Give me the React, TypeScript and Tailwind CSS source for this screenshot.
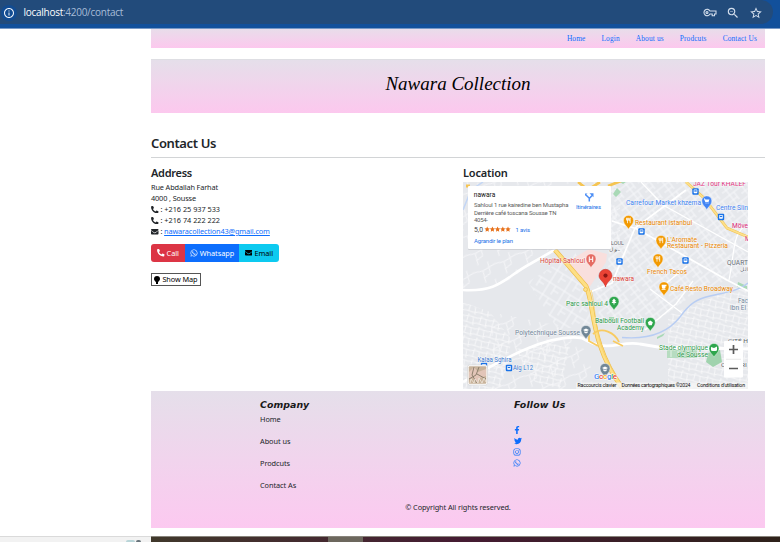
import React from "react";
import {
  FaPhoneAlt,
  FaEnvelope,
  FaWhatsapp,
  FaFacebookF,
  FaTwitter,
  FaInstagram,
} from "react-icons/fa";
import { MdOutlineInfo, MdStarBorder, MdZoomOut } from "react-icons/md";

type LabelProps = {
  x: number;
  y: number;
  w: number;
  fill: string;
  size?: number;
  children: string;
};

function Label({ x, y, w, fill, size = 6.8, children }: LabelProps) {
  return (
    <text
      x={x}
      y={y}
      textLength={w}
      lengthAdjust="spacingAndGlyphs"
      fontSize={size}
      fill={fill}
      stroke="#ffffff"
      strokeWidth={1}
      strokeOpacity={0.6}
      paintOrder="stroke"
      fontWeight={400}
    >
      {children}
    </text>
  );
}

type PinKind = "food" | "cup" | "cart" | "school" | "tree" | "ball" | "stadium" | "hospital";

function Pin({ x, y, color, kind }: { x: number; y: number; color: string; kind: PinKind }) {
  return (
    <g transform={`translate(${x} ${y})`}>
      <path
        d="M0 8.2C-.8 5.8-5 3.6-5-.6A5 5 0 0 1 5-.6C5 3.6.8 5.8 0 8.2Z"
        fill={color}
        stroke="#fff"
        strokeWidth=".4"
      />
      {kind === "food" && (
        <path d="M-2-3.2v2.4h2v-2.4M-1-3.2v5.4M1.7 2.2v-5.4q-.9.6-.9 3h.9" fill="none" stroke="#fff" strokeWidth=".75" />
      )}
      {kind === "cup" && (
        <path d="M-2.4-2.8h4.9v1.5h-1v1.2q0 1.3-1.3 1.3h-1q-1.3 0-1.3-1.3zM-2.4 1.7h4v.8h-4z" fill="#fff" />
      )}
      {kind === "cart" && (
        <path d="M-3-2.9h1.2l.4.9h4L1.7.4h-3.2zM-1.2 1h.9v.9h-.9zM.8 1h.9v.9H.8z" fill="#fff" />
      )}
      {kind === "school" && (
        <path d="M-3-1 0-2.6 3-1 0 .6zM-1.8.2 0 1.3 1.8.2v1.3L0 2.5l-1.8-1z" fill="#fff" />
      )}
      {kind === "tree" && <path d="m0-3.4 2 2.5H1L2.5 1H.5v1.5h-1V1h-2L-1-.9h-1z" fill="#fff" />}
      {kind === "ball" && <path d="m0-2.5 2.5 1.8-1 2.9h-3l-1-2.9z" fill="#fff" />}
      {kind === "stadium" && <path d="M-3-2 0-1l3-1.4v3.8q-3 1.3-6 0z" fill="#fff" />}
      {kind === "hospital" && <path d="M-1.7-3v5.6M1.7-3v5.6M-1.7-.2h3.4" fill="none" stroke="#fff" strokeWidth="1" />}
    </g>
  );
}

function BusStop({ x, y }: { x: number; y: number }) {
  return (
    <g transform={`translate(${x} ${y})`}>
      <rect x="-3.2" y="-3.2" width="6.4" height="6.4" rx="1" fill="#1a73e8" />
      <rect x="-1.8" y="-2" width="3.6" height="3.7" rx=".6" fill="#fff" />
      <path d="M-1.2-1.2h2.4V.1h-2.4z" fill="#1a73e8" />
    </g>
  );
}

const orange = "#e98600";
const green = "#2b984a";
const blue = "#3b7ff0";

function MapDrawing() {
  return (
    <svg
      viewBox="463 182 285 207"
      className="block h-[207px] w-[285px] font-[Roboto,sans-serif]"
    >
      <defs>
        <pattern id="streets-a" width="15" height="12" patternUnits="userSpaceOnUse" patternTransform="rotate(-38)">
          <path d="M0 3H15M0 9H10M5 0V12M10 3V12" stroke="#f7f8fa" strokeWidth=".9" fill="none" />
        </pattern>
        <pattern id="streets-b" width="17" height="14" patternUnits="userSpaceOnUse" patternTransform="rotate(32)">
          <path d="M0 4H17M4 0V14M11 4V14M11 9H17" stroke="#f7f8fa" strokeWidth=".9" fill="none" />
        </pattern>
        <pattern id="streets-c" width="13" height="11" patternUnits="userSpaceOnUse" patternTransform="rotate(12)">
          <path d="M0 3 5 2 13 3M0 8 8 9 13 8M4 0 3 8M9 3 10 11" stroke="#fafafb" strokeWidth=".8" fill="none" />
        </pattern>
        <pattern id="streets-d" width="23" height="19" patternUnits="userSpaceOnUse" patternTransform="rotate(-24)">
          <path d="M0 5 9 7 23 5M9 7 7 19M7 14 15 12 17 0" stroke="#f7f8fa" strokeWidth=".8" fill="none" />
        </pattern>
      </defs>
      <rect x="463" y="182" width="285" height="207" fill="#e6e8ec" />

      <path d="M463 182H620V246H463ZM463 249H550L505 283 463 288Z" fill="url(#streets-d)" />
      <path d="M612 182H748V273L700 290 640 333 600 322 595 290 608 268Z" fill="url(#streets-a)" />
      <path d="M528 282 575 252 592 290 590 324 558 330Z" fill="url(#streets-b)" />
      <path d="M463 302 490 312 512 340 500 389H463ZM515 349 548 343 570 347 560 389 535 382ZM668 315 748 283V389H668Z" fill="url(#streets-c)" />
      <path d="M490 312 555 325 582 345 600 389H495Z" fill="url(#streets-d)" />

      <path d="M567 262 589 249 607 254 606 262 589 288Z" fill="#f9dfdd" />
      <path d="m617 188 4 4-5 5-3-3zM620 182h6l-3 2zM738 282l9 4v3l-10-2zM657 337l8-4-2 3-6 3zM609 317h5v4h-5z" fill="#a9d9b6" />
      <path d="M667 350h30v8h-30z" fill="#b6dcc0" />
      <path d="M671 351v6M678 351v6M688 351v6" stroke="#e3f1e6" strokeWidth="1" />
      <path d="M708 353l12-3 2 12-9 5-7-5z" fill="#a0d3ae" />
      <path d="M622 337.5C651 340 669 331 680 317 690 303 697 299 710 296 728 292 738 291 748 283" fill="none" stroke="#b8cdf3" strokeWidth="1.4" />
      <path d="M463 210l8-20 12-8" fill="none" stroke="#c3d6f5" strokeWidth="1.5" />

      <path d="M463 290C500 292 504 278 530 264L558 248" fill="none" stroke="#fff" strokeWidth="2.6" />
      <path d="M463 382C500 361 547 333 582 338 608 354 620 340 640 344L658 347 748 349" fill="none" stroke="#fff" strokeWidth="2.8" />
      <path d="M590 292 612 283 635 228 686 190M612 221 637 229 727 280 748 291" fill="none" stroke="#fff" strokeWidth="1.7" />
      <path d="M645 330 676 304 693 281M663 286 687 266" fill="none" stroke="#fff" strokeWidth="1.4" />
      <path d="M748 224C732 232 735 251 729 280M641 182 663 205 748 252M650 289 682 313" fill="none" stroke="#fff" strokeWidth="1.2" />

      <g fill="none">
        <path d="M555 250 586 286C595 304 589 343 623 389" stroke="#eebb45" strokeWidth="4.6" />
        <path d="M555 250 586 286C595 304 589 343 623 389" stroke="#fddf85" strokeWidth="3.3" />
        <path d="M593 334C602 326 615 333 619 342M613 341l10 5M589 334v7l9 5" stroke="#f8cb61" strokeWidth="1.8" />
        <path d="M686 182 704 198 727 228 748 237M466 186h4M578 182l10 8 12-8M608 186l13-5" stroke="#f5c451" strokeWidth="2.8" />
        <path d="M686 182 704 198 727 228 748 237" stroke="#fce08c" strokeWidth="1.7" />
      </g>
      <circle cx="585.5" cy="289.5" r="2" fill="#fddf85" stroke="#eebb45" strokeWidth=".7" />
      <path d="M591 290C597 307 592 340 615 374" fill="none" stroke="#f6c955" strokeWidth=".6" />

      <BusStop x={695.5} y={191.5} />
      <BusStop x={721} y={217} />
      <BusStop x={641.5} y={231.5} />
      <BusStop x={619.5} y={261.5} />
      <BusStop x={685.5} y={260.5} />
      <BusStop x={509} y={368} />
      <BusStop x={484} y={366} />

      <Label x={693} y={186.3} w={53} fill="#e1347e" size={7.2}>JAZ Tour KHALEF</Label>
      <Label x={626} y={205.3} w={75} fill={blue}>Carrefour Market khzema</Label>
      <Label x={716} y={210} w={32} fill={blue}>Centre Slin</Label>
      <Label x={635} y={225} w={57} fill={orange}>Restaurant istanbul</Label>
      <Label x={732} y={227.5} w={16} fill="#d81b72">Möve</Label>
      <Label x={745} y={241} w={5} fill="#d81b72">M</Label>
      <Label x={667} y={241.8} w={30} fill={orange}>L'Aromate</Label>
      <Label x={667} y={248.3} w={61} fill={orange}>Restaurant - Pizzeria</Label>
      <Label x={611} y={245} w={13} fill="#5f6368" size={5}>LOUL</Label>
      <Label x={609} y={250.5} w={10} fill="#5f6368" size={5}>ـول</Label>
      <Label x={727} y={264.5} w={21} fill="#676c75">QUART</Label>
      <Label x={740} y={271} w={8} fill="#676c75" size={5}>الل</Label>
      <Label x={540} y={262.8} w={45} fill="#d9453d">Hôpital Sahloul</Label>
      <Label x={647} y={274.3} w={40} fill={orange}>French Tacos</Label>
      <Label x={613} y={280.7} w={21} fill="#d93d35">nawara</Label>
      <Label x={670} y={291.3} w={63} fill={orange}>Café Resto Broadway</Label>
      <Label x={738} y={303} w={10} fill="#70859a">Fac</Label>
      <Label x={730} y={309.5} w={16} fill="#70859a">Ibn El</Label>
      <Label x={566} y={306} w={42} fill={green}>Parc sahloul 4</Label>
      <Label x={595} y={323.3} w={49} fill={green}>Balbouli Football</Label>
      <Label x={617} y={330} w={27} fill={green}>Academy</Label>
      <Label x={515} y={334.5} w={65} fill="#70859a">Polytechnique Sousse</Label>
      <Label x={659} y={350} w={49} fill={green}>Stade olympique</Label>
      <Label x={677} y={356.5} w={31} fill={green}>de Sousse</Label>
      <Label x={477.5} y={362.3} w={34} fill="#3977cf">Kalaa Sghira</Label>
      <Label x={513} y={370.3} w={20} fill="#3977cf">Aig L12</Label>
      <Label x={728} y={343} w={20} fill="#5f6368" size={5}>CITÉ H</Label>
      <Label x={721} y={367} w={26} fill="#5f6368" size={5}>CITÉ ERI</Label>

      <Pin x={628.5} y={221} color="#f29900" kind="food" />
      <Pin x={661} y={241} color="#f29900" kind="food" />
      <Pin x={658} y={259.5} color="#f29900" kind="food" />
      <Pin x={664} y={287.5} color="#f29900" kind="cup" />
      <Pin x={706.8} y={201.5} color="#4285f4" kind="cart" />
      <Pin x={591} y={259.5} color="#e56b62" kind="hospital" />
      <Pin x={614} y={302} color="#2ea64d" kind="tree" />
      <Pin x={650.3} y={323} color="#2ea64d" kind="ball" />
      <Pin x={586} y={331} color="#718797" kind="school" />
      <Pin x={605} y={369} color="#718797" kind="school" />
      <Pin x={714} y={349} color="#2ea64d" kind="stadium" />
      <path d="M605.5 287C604.5 282 599 280 599 275.8a6.5 6.5 0 0 1 13 0C612 280 606.5 282 605.5 287Z" fill="#ea4335" stroke="#c5221f" strokeWidth=".5" />
      <circle cx="605.5" cy="275.6" r="2.1" fill="#8c1713" />

      <text x="594" y="379.3" fontSize="8" fontWeight="500" textLength="23" stroke="#fff" strokeWidth="1" paintOrder="stroke">
        <tspan fill="#4285f4">G</tspan><tspan fill="#ea4335">o</tspan><tspan fill="#f5b100">o</tspan><tspan fill="#4285f4">g</tspan><tspan fill="#34a853">l</tspan><tspan fill="#ea4335">e</tspan>
      </text>
      <rect x="576" y="382.5" width="172" height="6.5" fill="#f5f5f5" opacity=".8" />
      <g fontSize="5.2" fill="#111">
        <text x="577.5" y="387.2" textLength="39">Raccourcis clavier</text>
        <text x="621.5" y="387.2" textLength="69">Données cartographiques ©2024</text>
        <text x="697" y="387.2" textLength="48">Conditions d'utilisation</text>
      </g>

      <g>
        <rect x="467.5" y="365" width="20" height="20" rx="2" fill="#fff" stroke="#c9c9c9" strokeWidth=".5" />
        <rect x="468.7" y="366.2" width="17.6" height="17.6" rx="1" fill="#c8b39b" />
        <path d="m469 372 5-5 4 5 8-3v7l-6 2-3 5-4-5-4 1z" fill="#e2c5b8" />
        <path d="m469 379 7-4 3-8M474 367l-2 8 5 8M477 374l9 5" fill="none" stroke="#857865" strokeWidth=".9" />
        <path d="m470 383 1-4 3 4 1-4 3 4 1-5 3 5 2-5 2 4" fill="none" stroke="#f1e8dd" strokeWidth=".8" />
      </g>
      <rect x="724" y="341" width="19" height="36.5" rx="1" fill="#fff" />
      <path d="M726 359.3h15" stroke="#e5e5e5" strokeWidth=".8" />
      <path d="M729 349.5h9M733.5 345v9M729 368.5h9" stroke="#5b5b5b" strokeWidth="1.7" />

      <rect x="468" y="187" width="143" height="63" rx="1" fill="#bfc2c8" opacity=".6" />
      <rect x="468" y="186" width="143" height="63" rx="1" fill="#fff" />
      <text x="473.8" y="197.2" textLength="21.5" lengthAdjust="spacingAndGlyphs" fontSize="7" fill="#111">nawara</text>
      <g fontSize="6" fill="#5c5c5c">
        <text x="474" y="207.4" textLength="94.5">Sahloul 1 rue kairedine ben Mustapha</text>
        <text x="474" y="214.5" textLength="82.5">Derrière café toscana Sousse TN</text>
        <text x="474" y="221.7" textLength="14">4054-</text>
      </g>
      <text x="474" y="231.5" textLength="9" fontSize="6.8" fill="#444">5,0</text>
      {[0, 1, 2, 3, 4].map((i) => (
        <path
          key={i}
          transform={`translate(${487.2 + i * 5.2} 229.2)`}
          d="m0-2.6.8 1.7 1.9.2L1.3.6l.3 1.9L0 1.6l-1.6.9.3-1.9-1.4-1.3 1.9-.2z"
          fill="#e7711b"
        />
      ))}
      <g fontSize="6" fill="#1a73e8">
        <text x="515.5" y="231.5" textLength="14.5">1 avis</text>
        <text x="474" y="243" textLength="39">Agrandir le plan</text>
        <text x="576" y="209" textLength="25">Itinéraires</text>
      </g>
      <path d="M589.3 201.5v-3.3l-3.3-3.2M589.3 198.5l2.8-3" stroke="#4b8df5" strokeWidth="1.5" fill="none" />
      <path d="M589.5 193.2h4v4zM585 193.5h2.5L585 196z" fill="#4b8df5" />
    </svg>
  );
}

const ui = "font-['Noto_Sans','Open_Sans',sans-serif]";

function BrowserBar() {
  return (
    <header className="h-[29px] border-b border-[#7899c6] bg-[#12509b]">
      <div className="flex h-6 w-[773px] items-center rounded-r-full bg-[#224b7b] pt-px">
        <span className="ml-px flex size-4 items-center justify-center rounded-full bg-[#124c92]">
          <MdOutlineInfo size={12} color="#f2f6fc" />
        </span>
        <span className="ml-[6.5px] font-['Open_Sans',sans-serif] text-[10px] tracking-[-0.27px] text-[#a9bdd8]">
          <span className="text-white">localhost</span>:4200/contact
        </span>
        <div className="ml-auto flex items-center pr-[10px] text-[#d3deed]">
          <svg viewBox="0 0 14 9" className="mr-[9px] h-[9px] w-[14px]" fill="none" stroke="currentColor" strokeWidth="1.1">
            <path d="M7 3a3.2 3.2 0 1 0 0 3h2.2v1.8h2.3V6H13V3Z" />
            <circle cx="4" cy="4.5" r="1" />
          </svg>
          <MdZoomOut size={14} className="mr-[9px]" />
          <MdStarBorder size={14} />
        </div>
      </div>
    </header>
  );
}

function Address() {
  return (
    <section className="w-[312px]">
      <h2 className="mt-[6px] h-[18px] text-[11px] leading-[17px] font-semibold tracking-[-0.3px]">Address</h2>
      <address className="text-[7.33px] leading-[11px] tracking-[-0.13px] not-italic">
        <div>Rue Abdallah Farhat</div>
        <div>4000 , Sousse</div>
        <div className="flex items-center gap-[2px] tracking-[-0.02px]"><FaPhoneAlt size={7.5} /><span>: +216 25 937 533</span></div>
        <div className="flex items-center gap-[2px] tracking-[-0.02px]"><FaPhoneAlt size={7.5} /><span>: +216 74 222 222</span></div>
        <div className="flex items-center gap-[2px]">
          <FaEnvelope size={7.5} />
          <span>: <a className="text-[#0d6efd] underline">nawaracollection43@gmail.com</a></span>
        </div>
      </address>
      <div className="mt-[7px] flex h-[18px] w-[128px] overflow-hidden rounded-[3px] text-[7.33px] tracking-[-0.04px]">
        <button className="flex w-[34px] items-center justify-center gap-[2px] bg-[#dc3545] text-white"><FaPhoneAlt size={7.5} />Call</button>
        <button className="flex w-[54px] items-center justify-center gap-[2px] bg-[#0d6efd] text-white"><FaWhatsapp size={8} />Whatsapp</button>
        <button className="flex w-10 items-center justify-center gap-[2px] bg-[#0dcaf0] text-black"><FaEnvelope size={7.5} />Email</button>
      </div>
      <button className="mt-[11px] flex h-[13px] w-[50px] items-center justify-center gap-[2px] border border-[#555] text-[7.33px] tracking-[-0.08px] text-black">
        <svg viewBox="0 0 6 8" className="h-2 w-[6px]"><path d="M3 0a3 3 0 0 0-3 3c0 1.4 1.4 2 2 3.3V8h2V6.3C4.6 5 6 4.4 6 3a3 3 0 0 0-3-3Z" /></svg>
        <span>Show Map</span>
      </button>
    </section>
  );
}

function Footer() {
  return (
    <footer className="mt-[2px] h-[137px] bg-linear-to-b from-[#e5dfea] to-[#fcc9f0] text-[7.33px] leading-[11px]">
      <div className="flex h-[111px] pt-2">
        <div className="ml-[109px] w-[254px]">
          <h3 className="h-[15px] font-['DejaVu_Sans',sans-serif] text-[9.4px] leading-[12px] font-bold tracking-[0.05px] text-[#181818] italic">Company</h3>
          <div className="flex flex-col gap-[11px] tracking-[-0.05px]">
            <a>Home</a><a>About us</a><a>Prodcuts</a><a>Contact As</a>
          </div>
        </div>
        <div>
          <h3 className="h-[15px] font-['DejaVu_Sans',sans-serif] text-[9.4px] leading-[12px] font-bold tracking-[0.15px] text-[#181818] italic">Follow Us</h3>
          <div className="mt-3 flex flex-col gap-[3px] text-[#0d6efd]">
            <FaFacebookF size={8} className="-ml-[1.5px]" />
            <FaTwitter size={8} />
            <FaInstagram size={8} className="-ml-px" />
            <FaWhatsapp size={8} className="-ml-px" />
          </div>
        </div>
      </div>
      <p className="text-center tracking-[-0.08px]">© Copyright All rights reserved.</p>
    </footer>
  );
}

export default function App() {
  return (
    <div className={`h-[542px] w-[780px] overflow-hidden bg-white text-[#212529] ${ui}`}>
      <BrowserBar />
      <div className="ml-[151px] h-[507px] w-[614px]">
        <nav className="flex h-[19px] items-center justify-end gap-4 bg-linear-to-b from-[#e8ddea] to-[#fcc8ee] pt-px pr-2 font-['Liberation_Serif',serif] text-[7.4px] tracking-[0.13px] text-[#0d6efd]">
          <a>Home</a><a>Login</a><a>About us</a><a>Prodcuts</a><a>Contact Us</a>
        </nav>
        <div className="mt-[11px] flex h-[54px] items-center justify-center border-t border-[#dedee3] bg-linear-to-b from-[#e5dfea] to-[#fcc8ee] pb-[4px] font-['Liberation_Serif',serif] text-[19px] text-black italic">
          <h1>Nawara Collection</h1>
        </div>
        <h2 className="h-[45px] border-b border-[#d2d4d6] pt-[20px] text-[13px] leading-[20px] font-semibold tracking-[-0.38px]">Contact Us</h2>
        <div className="flex h-[231px]">
          <Address />
          <section className="w-[285px]">
            <h2 className="mt-[6px] h-[18px] text-[11px] leading-[17px] font-semibold tracking-[-0.2px]">Location</h2>
            <MapDrawing />
          </section>
        </div>
        <Footer />
      </div>
      <div className="flex h-[6px]">
        <div className="flex w-[151px] justify-end border-t border-[#dadada] bg-[#f2f2f2] pt-[3px] pr-[10px]">
          <span className="h-[2px] w-[9px] rounded-t bg-[#b9d5d8]" />
          <span className="ml-px h-[2px] w-[5px] rounded-t bg-[#68747b]" />
        </div>
        <div className="flex flex-1 border-t border-[#88847c] bg-linear-to-r from-[#40382b] via-[#451b32] to-[#2e211a]">
          <div className="ml-[177px] w-[35px] bg-[#6c675d]" />
        </div>
      </div>
    </div>
  );
}
